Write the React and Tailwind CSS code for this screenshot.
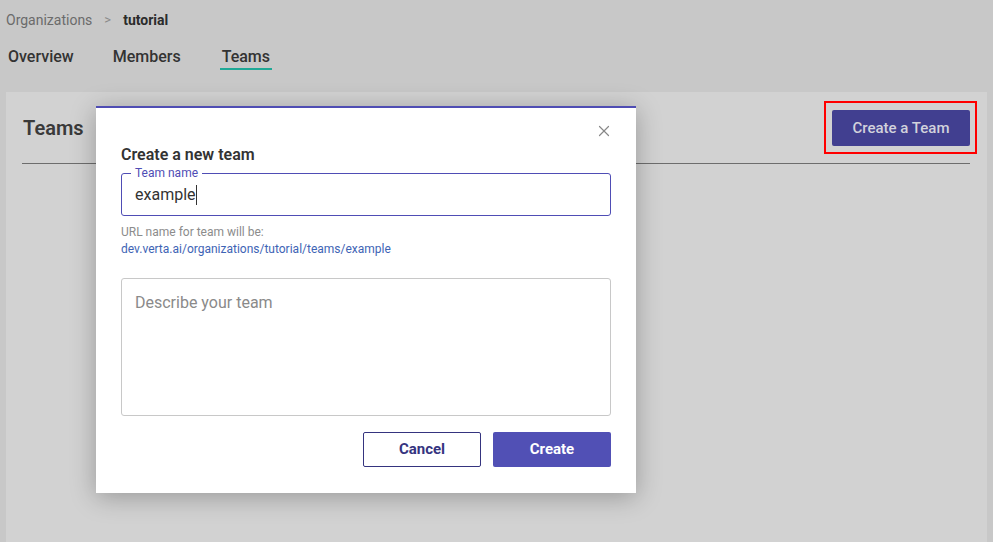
import { X } from "lucide-react";

const tabs = ["Overview", "Members", "Teams"];

const App = () => {
  return (
    <div className="relative h-[542px] overflow-hidden bg-[#c8c8c8] font-['Roboto',sans-serif] text-[#333]">
      {/* breadcrumb */}
      <div className="flex items-center h-5 mt-[10px] px-[6px] text-[14px]">
        <span className="text-[#6b6b6b]">Organizations</span>
        <span className="ml-[12px] mr-[12px] text-[#8a8a8a] text-[13px]">&gt;</span>
        <span className="font-bold text-[#2b2b2b]">tutorial</span>
      </div>

      {/* tabs */}
      <div className="flex items-start mt-[17px] pl-[8px] h-[28px]">
        {tabs.map((tab) => (
          <div
            key={tab}
            className={
              tab === "Overview"
                ? "mr-[39px]"
                : tab === "Members"
                ? "mr-[41px]"
                : ""
            }
          >
            <div
              className={
                tab === "Teams"
                  ? "text-[16px] font-medium leading-5 px-[2px] -mx-[2px] pb-[1px] border-b-2 border-[#1fa896]"
                  : "text-[16px] font-medium leading-5"
              }
            >
              {tab}
            </div>
          </div>
        ))}
      </div>

      {/* panel */}
      <div className="mx-[6px] mt-[17px] h-[460px] bg-[#d2d2d2] pl-4 pr-[17px]">
        <div className="flex items-center justify-between pt-[18px] pb-[17px] border-b border-[#6d6d6d]">
          <h1 className="text-[20px] font-semibold text-[#3a3a3a] pl-[1px]">Teams</h1>
          <div className="relative">
            <button className="h-9 w-[138px] rounded-[2px] bg-[#413f90] text-[15px] font-medium text-[#d2d2dc]">
              Create a Team
            </button>
            <span className="absolute -left-[8px] -right-[7px] -top-[9px] -bottom-[8px] border-2 border-[#ff0000]" />
          </div>
        </div>
      </div>

      {/* modal */}
      <div className="absolute left-[96px] top-[106px] w-[540px] h-[387px] bg-white border-t-2 border-[#4f4db3] shadow-[0_4px_24px_rgba(0,0,0,0.28)] px-[25px]">
        <div className="flex justify-end pt-[16px]">
          <X size={18} strokeWidth={1.6} className="text-[#888] -mt-[2px] -mr-[2px]" />
        </div>
        <h2 className="mt-[5px] text-[16px] leading-5 font-semibold text-[#333]">Create a new team</h2>

        <div className="relative mt-[8px] h-[43px] rounded-[3px] border border-[#4f4db5] flex items-center px-[13px]">
          <span className="absolute -top-[8px] left-[9px] bg-white px-[4px] text-[12px] leading-[14px] text-[#4f4db5]">
            Team name
          </span>
          <span className="text-[16px] text-[#333]">example</span>
          <span className="w-px h-[20px] bg-[#333]" />
        </div>

        <div className="mt-[8px] text-[12px] leading-[17px]">
          <div className="text-[#8c8c8c]">URL name for team will be:</div>
          <div className="text-[#3e64b5]">dev.verta.ai/organizations/tutorial/teams/example</div>
        </div>

        <div className="mt-[20px] h-[138px] rounded-[3px] border border-[#c8c8c8] px-[13px] pt-[12px]">
          <span className="text-[16px] text-[#8a8a8a]">Describe your team</span>
        </div>

        <div className="flex justify-end gap-3 mt-4">
          <button className="h-[35px] w-[118px] rounded-[2px] border border-[#35347f] text-[15px] font-bold text-[#35347f]">
            Cancel
          </button>
          <button className="h-[35px] w-[118px] rounded-[2px] bg-[#5150b5] text-[15px] font-bold text-white">
            Create
          </button>
        </div>
      </div>
    </div>
  );
};

export default App;
